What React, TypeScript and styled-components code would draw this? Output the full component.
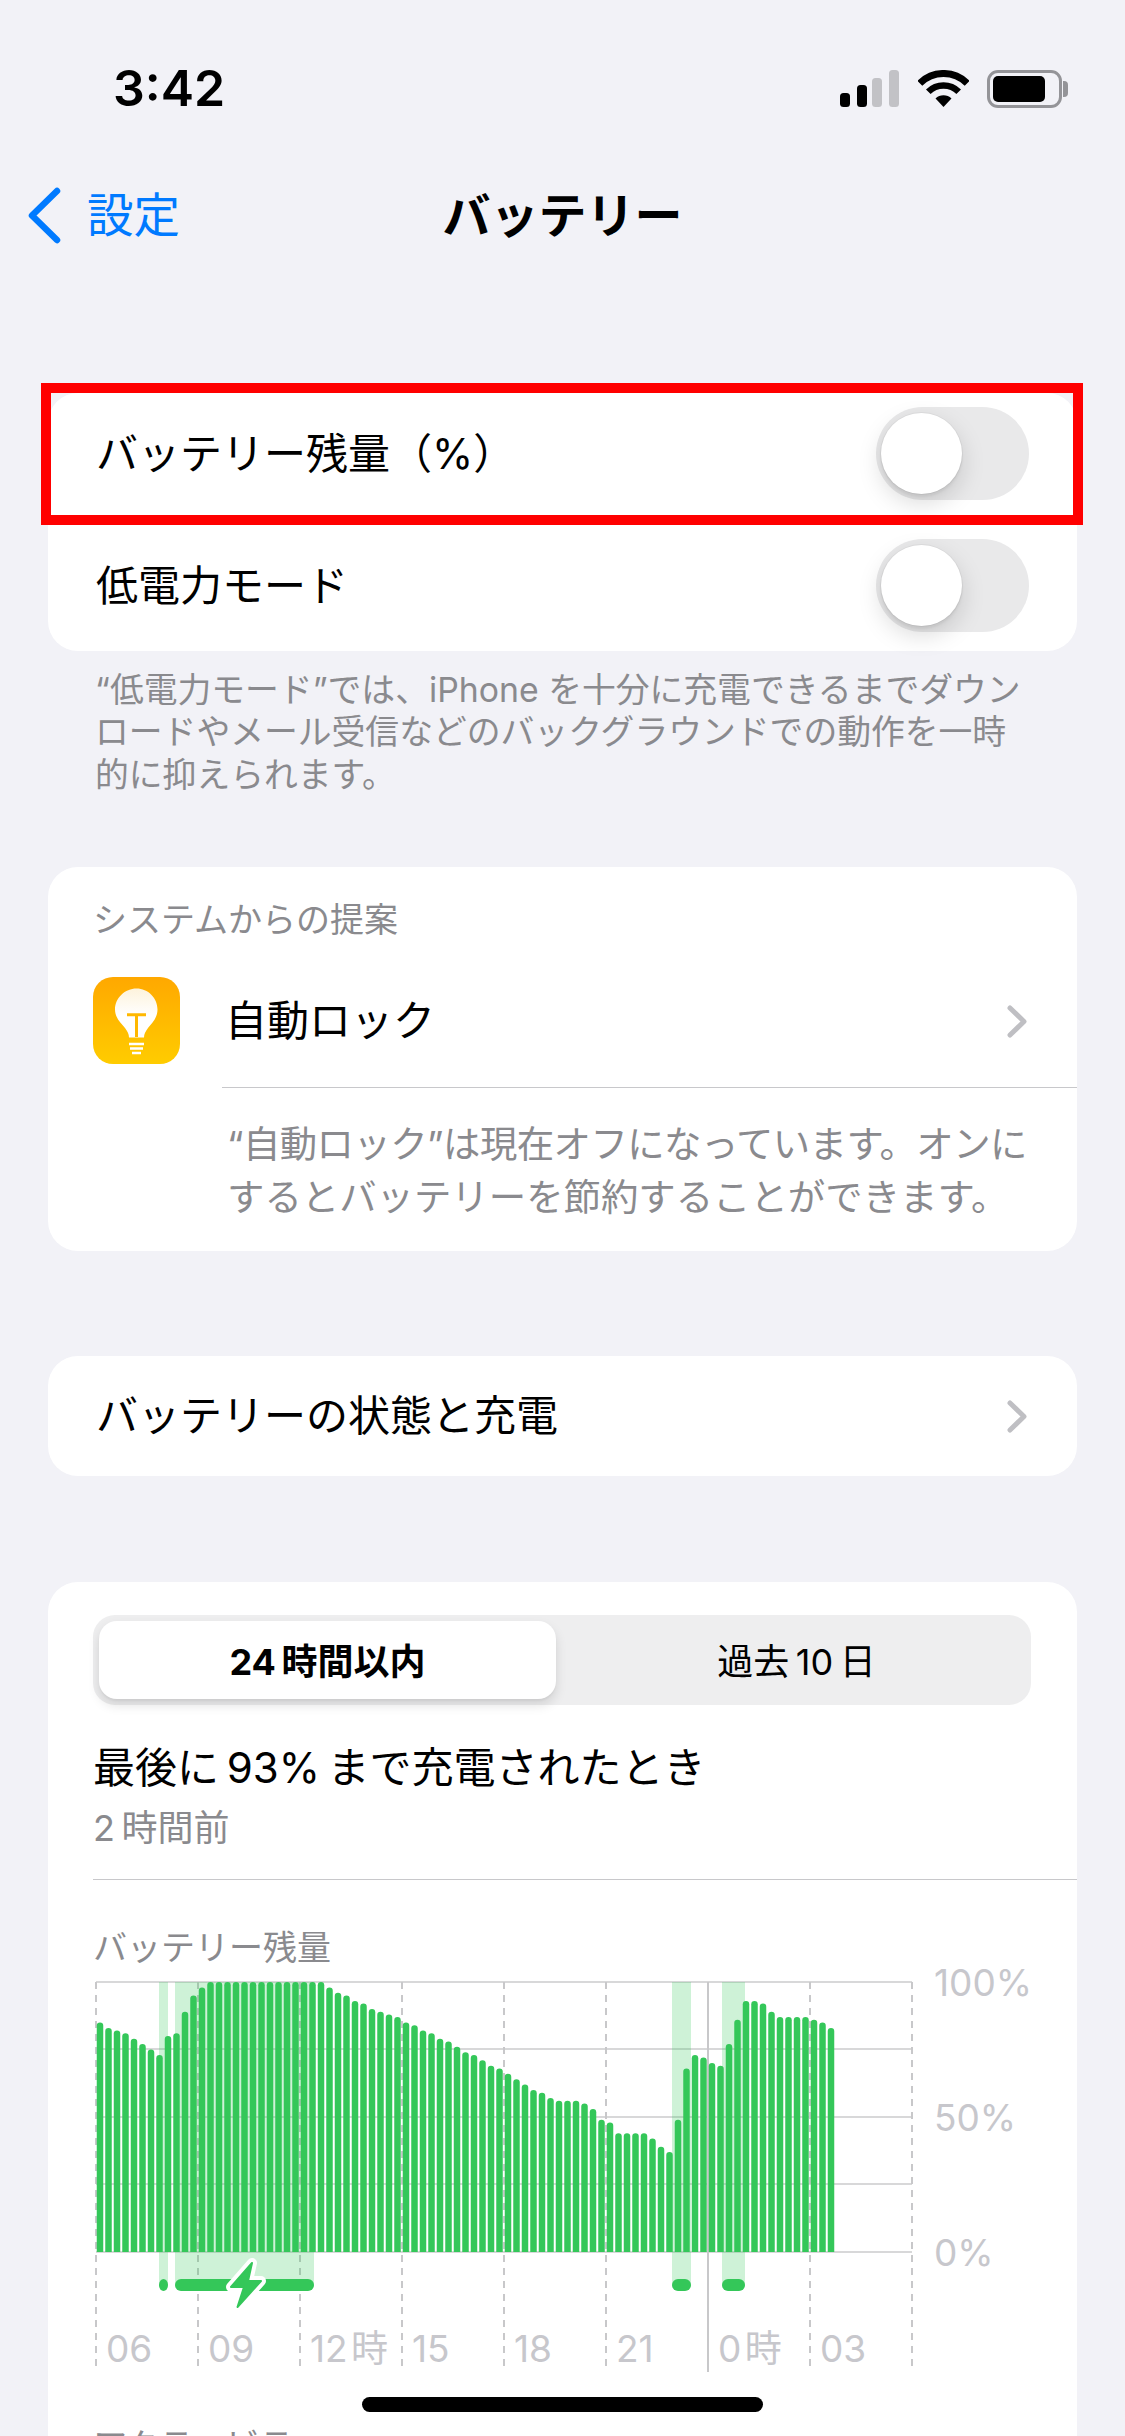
import styled, { createGlobalStyle } from "styled-components";

const GlobalStyle = createGlobalStyle`
  html, body {
    margin: 0;
    padding: 0;
    background: #f2f2f7;
  }
  body {
    font-family: Inter, "Noto Sans CJK JP", sans-serif;
    color: #000;
  }
`;

// battery level per bar, read off the graph
const levels = [
  85, 83, 82, 81, 79, 77, 75, 73, 80, 81, 89, 95, 98, 100, 100, 100, 100, 100, 100, 100, 100, 100,
  100, 100, 100, 100, 100, 98, 96, 95, 93, 92, 90, 89, 88, 87, 85, 84, 82, 81, 79, 78, 76, 74, 73,
  71, 69, 68, 66, 64, 62, 60, 59, 57, 56, 56, 56, 55, 53, 49, 48, 44, 44, 44, 44, 42, 39, 37, 49,
  68, 73, 72, 70, 69, 77, 86, 93, 93, 92, 89, 87, 87, 87, 87, 86, 85, 83,
];
const charging = [
  [159, 168],
  [175, 314],
  [672, 691],
  [722, 745],
];
const dashedLines = [96, 198, 300, 402, 504, 606, 810, 912];
const hourLabels = ["06", "09", "12\u200a時", "15", "18", "21", "0\u200a時", "03"];
const gridLines = [1982, 2049, 2117, 2184, 2252];
const boltPath = "M252 2263L231 2287H244L237.5 2307L261 2281H248Z";

const Toggle = () => (
  <ToggleTrack>
    <ToggleKnob />
  </ToggleTrack>
);

const Chevron = () => (
  <ChevronIcon viewBox="0 0 21 33" width="21" height="33">
    <polyline points="3,3 17,16.5 3,30" />
  </ChevronIcon>
);

const BatteryChart = () => (
  <ChartArea>
    <svg viewBox="93 1975 825 400" width="825" height="400">
      {gridLines.map((y) => (
        <line key={y} x1="96" x2="912" y1={y} y2={y} stroke="#cbcbcd" strokeWidth="1.5" />
      ))}
      {dashedLines.map((x) => (
        <line
          key={x}
          x1={x}
          x2={x}
          y1="1982"
          y2="2366"
          stroke="#c8c8ca"
          strokeWidth="2"
          strokeDasharray="7 6"
        />
      ))}
      <line x1="708" x2="708" y1="1982" y2="2372" stroke="#c8c8ca" strokeWidth="2" />
      {charging.map(([from, to]) => (
        <rect
          key={from}
          x={from}
          y="1982"
          width={to - from}
          height="303"
          fill="rgba(52, 199, 89, 0.24)"
        />
      ))}
      {levels.map((level, i) => {
        const left = 96.75 + i * 8.5;
        const top = 2252 - level * 2.7;
        return (
          <path
            key={i}
            d={`M${left} 2252V${top + 3.25}a3.25 3.25 0 0 1 6.5 0V2252Z`}
            fill="#34c759"
          />
        );
      })}
      {charging.map(([from, to]) => (
        <rect
          key={from}
          x={from}
          y="2279"
          width={to - from}
          height="12"
          rx="6"
          fill="#34c759"
        />
      ))}
      <path d={boltPath} fill="#34c759" stroke="#fff" strokeWidth="10" strokeLinejoin="round" />
      <path d={boltPath} fill="#34c759" stroke="#34c759" strokeWidth="2" strokeLinejoin="round" />
    </svg>
    <YAxis>
      <AxisLabel>100%</AxisLabel>
      <AxisLabel>50%</AxisLabel>
      <AxisLabel>0%</AxisLabel>
    </YAxis>
    <XAxis>
      {hourLabels.map((label) => (
        <HourLabel key={label}>{label}</HourLabel>
      ))}
    </XAxis>
  </ChartArea>
);

const App = () => {
  return (
    <Screen>
      <GlobalStyle />
      <StatusBar>
        <Time>3:42</Time>
        <StatusIcons>
          <svg viewBox="0 0 60 37" width="60" height="37">
            <rect x="0" y="23" width="10" height="14" rx="3.5" fill="#000" />
            <rect x="17" y="15" width="10" height="22" rx="3.5" fill="#000" />
            <rect x="32" y="8" width="10" height="29" rx="3.5" fill="#c2c2c6" />
            <rect x="49" y="0" width="10" height="37" rx="3.5" fill="#c2c2c6" />
          </svg>
          <svg viewBox="0 0 51 37" width="51" height="37">
            <path d="M1.8 13.3A33.5 33.5 0 0 1 49.2 13.3" fill="none" stroke="#000" strokeWidth="7" />
            <path d="M10.3 21.8A21.5 21.5 0 0 1 40.7 21.8" fill="none" stroke="#000" strokeWidth="6.5" />
            <path d="M25.5 37L17.5 28.5A11.5 11.5 0 0 1 33.5 28.5Z" fill="#000" />
          </svg>
          <BatteryIcon>
            <BatteryFill />
          </BatteryIcon>
        </StatusIcons>
      </StatusBar>

      <NavBar>
        <BackLink>
          <svg viewBox="0 0 34 57" width="34" height="57">
            <polyline
              points="30,4 5,28.5 30,53"
              fill="none"
              stroke="#007aff"
              strokeWidth="6.5"
              strokeLinecap="round"
              strokeLinejoin="round"
            />
          </svg>
          設定
        </BackLink>
        <NavTitle>バッテリー</NavTitle>
      </NavBar>

      <ToggleCard>
        <Highlight />
        <ToggleRow>
          <RowLabel>バッテリー残量（%）</RowLabel>
          <Toggle />
        </ToggleRow>
        <ToggleRow>
          <RowLabel>低電力モード</RowLabel>
          <Toggle />
        </ToggleRow>
      </ToggleCard>
      <FooterNote>
        “低電力モード”では、iPhone を十分に充電できるまでダウン
        <br />
        ロードやメール受信などのバックグラウンドでの動作を一時
        <br />
        的に抑えられます。
      </FooterNote>

      <SuggestionCard>
        <SuggestionTitle>システムからの提案</SuggestionTitle>
        <SuggestionRow>
          <svg viewBox="0 0 87 87" width="87" height="87">
            <defs>
              <linearGradient id="tile" x1="0" y1="0" x2="0" y2="1">
                <stop offset="0" stopColor="#ffa800" />
                <stop offset="1" stopColor="#ffcc00" />
              </linearGradient>
              <linearGradient id="bulb" x1="0" y1="0" x2="0" y2="1">
                <stop offset="0" stopColor="#fdf3dc" />
                <stop offset="0.55" stopColor="#ffffff" />
              </linearGradient>
            </defs>
            <rect width="87" height="87" rx="20" fill="url(#tile)" />
            <path
              d="M43.5 11.5C55 11.5 64.5 21 64.5 32.5C64.5 41 59 46 55 51C52.5 54.5 51 57 51 60.5H36C36 57 34.5 54.5 32 51C28 46 22 41 22 32.5C22 21 32 11.5 43.5 11.5Z"
              fill="url(#bulb)"
            />
            <path d="M34 37.7H53M43.5 37.7V60" stroke="#ffb800" strokeWidth="3" fill="none" />
            <path d="M36 67H51M37 71.5H50M39 76H48" stroke="#fff" strokeWidth="2.6" fill="none" />
          </svg>
          <SuggestionBody>
            <RowLabel>自動ロック</RowLabel>
            <Chevron />
          </SuggestionBody>
        </SuggestionRow>
        <SuggestionDetail>
          <TightLine>“自動ロック”は現在オフになっています。オンに</TightLine>
          <br />
          するとバッテリーを節約することができます。
        </SuggestionDetail>
      </SuggestionCard>

      <LinkCard>
        <RowLabel>バッテリーの状態と充電</RowLabel>
        <Chevron />
      </LinkCard>

      <UsageCard>
        <Segmented>
          <Segment $active>24{"\u2009"}時間以内</Segment>
          <Segment>過去{"\u2009"}10{"\u2009"}日</Segment>
        </Segmented>
        <LastCharge>最後に{"\u2009"}93%{"\u2009"}まで充電されたとき</LastCharge>
        <LastChargeTime>2{"\u2009"}時間前</LastChargeTime>
        <UsageDivider />
        <ChartTitle>バッテリー残量</ChartTitle>
        <BatteryChart />
        <ChartTitle $gap>アクティビティ</ChartTitle>
      </UsageCard>

      <HomeIndicator />
    </Screen>
  );
};

const Screen = styled.div`
  position: relative;
  width: 1125px;
  height: 2436px;
  overflow: hidden;
  background: #f2f2f7;
`;

const StatusBar = styled.div`
  height: 150px;
  box-sizing: border-box;
  padding: 70px 57px 0 113px;
  display: flex;
  justify-content: space-between;
  align-items: flex-start;
`;

const Time = styled.div`
  font-size: 50px;
  line-height: 37px;
  font-weight: 600;
`;

const StatusIcons = styled.div`
  display: flex;
  gap: 18px;
  align-items: flex-start;

  svg {
    display: block;
  }
`;

const BatteryIcon = styled.div`
  position: relative;
  width: 75px;
  height: 38px;
  box-sizing: border-box;
  border: 3px solid #949498;
  border-radius: 11px;
  padding: 3px;
  margin-right: 6px;

  &::after {
    content: "";
    position: absolute;
    right: -9px;
    top: 8px;
    width: 5px;
    height: 16px;
    border-radius: 0 4px 4px 0;
    background: #949498;
  }
`;

const BatteryFill = styled.div`
  width: 52px;
  height: 100%;
  background: #000;
  border-radius: 5px;
`;

const NavBar = styled.div`
  height: 132px;
  position: relative;
  display: flex;
  align-items: center;
  justify-content: center;
`;

const BackLink = styled.div`
  position: absolute;
  left: 27px;
  top: 37px;
  display: flex;
  align-items: center;
  gap: 26px;
  font-size: 46.5px;
  line-height: 57px;
  color: #007aff;

  svg {
    display: block;
  }
`;

const NavTitle = styled.div`
  font-size: 48px;
  font-weight: 700;
  margin-bottom: 8px;
`;

const Card = styled.div`
  position: relative;
  margin: 0 48px;
  background: #fff;
  border-radius: 30px;
`;

const ToggleCard = styled(Card)`
  margin-top: 111px;
  padding: 14px 48px 19px 48px;
  display: flex;
  flex-direction: column;
  gap: 39px;
`;

const Highlight = styled.div`
  position: absolute;
  left: -7px;
  right: -6px;
  top: -10px;
  height: 142px;
  box-sizing: border-box;
  border: 10px solid #ff0000;
`;

const ToggleRow = styled.div`
  display: flex;
  align-items: center;
  justify-content: space-between;
`;

const RowLabel = styled.div`
  font-size: 42px;
  line-height: 56px;
  color: #000;
`;

const ToggleTrack = styled.div`
  width: 153px;
  height: 93px;
  box-sizing: border-box;
  padding: 6px 5px;
  border-radius: 47px;
  background: #e9e9ea;
`;

const ToggleKnob = styled.div`
  width: 81px;
  height: 81px;
  border-radius: 50%;
  background: #fff;
  box-shadow: 0 9px 24px rgba(0, 0, 0, 0.15), 0 3px 3px rgba(0, 0, 0, 0.06),
    0 0 0 1px rgba(0, 0, 0, 0.04);
`;

const FooterNote = styled.div`
  margin: 17.5px 60px 0 95px;
  font-size: 33.8px;
  line-height: 42.5px;
  color: #8a8a8e;
  white-space: nowrap;
`;

const SuggestionCard = styled(Card)`
  margin-top: 71px;
  height: 384px;
  padding: 33px 0 0 45px;
  box-sizing: border-box;
`;

const SuggestionTitle = styled.div`
  font-size: 34px;
  line-height: 40px;
  color: #8a8a8e;
`;

const SuggestionRow = styled.div`
  margin-top: 37px;
  display: flex;
  align-items: flex-start;
  gap: 42px;

  svg {
    display: block;
    flex: none;
  }
`;

const SuggestionBody = styled.div`
  flex: 1;
  height: 111px;
  box-sizing: border-box;
  padding: 16px 49px 0 3px;
  display: flex;
  justify-content: space-between;
  align-items: flex-start;
  border-bottom: 1.5px solid #c8c8cb;
`;

const ChevronIcon = styled.svg`
  display: block;
  margin-top: 12px;

  polyline {
    fill: none;
    stroke: #bfbfc3;
    stroke-width: 5;
    stroke-linecap: round;
    stroke-linejoin: round;
  }
`;

const SuggestionDetail = styled.div`
  margin: 30px 0 0 134px;
  font-size: 37.4px;
  line-height: 53px;
  color: #8a8a8e;
  white-space: nowrap;
`;

const TightLine = styled.span`
  letter-spacing: -0.55px;
`;

const LinkCard = styled(Card)`
  margin-top: 105px;
  height: 120px;
  box-sizing: border-box;
  padding: 0 49px 0 48px;
  display: flex;
  align-items: center;
  justify-content: space-between;

  svg {
    margin-top: 0;
  }
`;

const UsageCard = styled(Card)`
  margin-top: 106px;
  padding: 33px 0 0 45px;
  height: 1000px;
  box-sizing: border-box;
`;

const Segmented = styled.div`
  margin-right: 46px;
  height: 90px;
  box-sizing: border-box;
  padding: 6px;
  display: flex;
  gap: 12px;
  border-radius: 22px;
  background: #eeeeef;
`;

const Segment = styled.div<{ $active?: boolean }>`
  flex: 1;
  display: flex;
  align-items: center;
  justify-content: center;
  padding-bottom: 2px;
  border-radius: 18px;
  font-size: 36px;
  font-weight: ${(props) => (props.$active ? 700 : 400)};
  background: ${(props) => (props.$active ? "#fff" : "transparent")};
  box-shadow: ${(props) =>
    props.$active ? "0 6px 12px rgba(0, 0, 0, 0.12), 0 2px 2px rgba(0, 0, 0, 0.04)" : "none"};
`;

const LastCharge = styled.div`
  margin-top: 35px;
  font-size: 42px;
  line-height: 56px;
`;

const LastChargeTime = styled.div`
  margin-top: 8px;
  font-size: 36px;
  line-height: 48px;
  color: #8a8a8e;
`;

const UsageDivider = styled.div`
  margin-top: 26.5px;
  height: 1.5px;
  background: #c8c8cb;
`;

const ChartTitle = styled.div<{ $gap?: boolean }>`
  margin-top: ${(props) => (props.$gap ? "51px" : "48px")};
  font-size: 34px;
  line-height: 40px;
  color: #8a8a8e;
`;

const ChartArea = styled.div`
  position: relative;
  margin-top: 7px;
  display: flex;
  align-items: flex-start;

  svg {
    display: block;
    flex: none;
  }
`;

const YAxis = styled.div`
  margin: -12px 0 0 16px;
  display: flex;
  flex-direction: column;
  gap: 95px;
`;

const AxisLabel = styled.div`
  font-size: 37px;
  line-height: 40px;
  color: #c7c7cc;
`;

const XAxis = styled.div`
  position: absolute;
  left: 3px;
  top: 354px;
  display: flex;
`;

const HourLabel = styled.div`
  width: 102px;
  box-sizing: border-box;
  padding-left: 10px;
  font-size: 37px;
  line-height: 40px;
  color: #c7c7cc;
  white-space: nowrap;
`;

const HomeIndicator = styled.div`
  position: absolute;
  left: 362px;
  top: 2397px;
  width: 401px;
  height: 15px;
  border-radius: 8px;
  background: #000;
`;

export default App;
